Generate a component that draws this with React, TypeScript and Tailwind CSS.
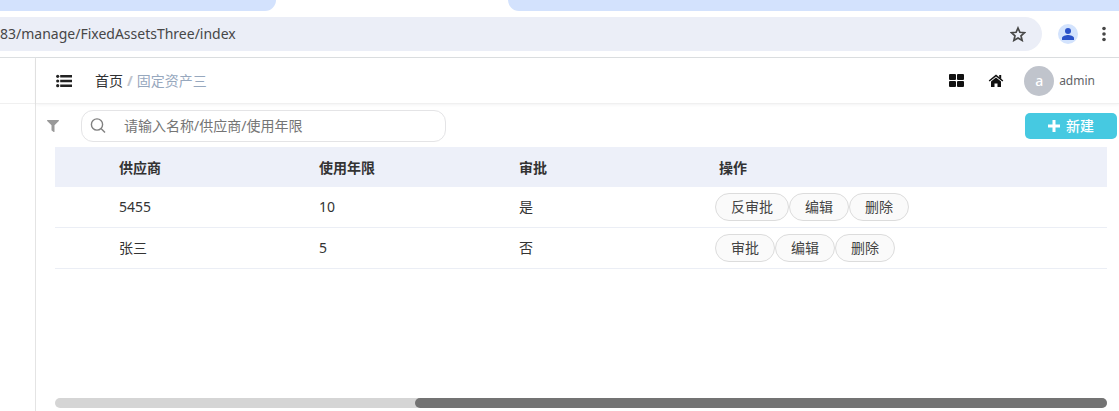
import { FaFilter } from "react-icons/fa";

const columns = ["供应商", "使用年限", "审批", "操作"];

const assets = [
  { supplier: "5455", years: 10, approved: true },
  { supplier: "张三", years: 5, approved: false },
];

function BrowserBar() {
  return (
    <div className="border-b border-[#dcdfe1]">
      <div className="flex h-[11px] overflow-hidden">
        <div className="w-[276px] rounded-br-[11px] bg-[#d3e2fd]" />
        <div className="w-[232px]" />
        <div className="flex-1 rounded-bl-[11px] bg-[#d3e2fd]" />
      </div>
      <div className="flex items-center py-[6px] pr-[5px]">
        <div className="flex h-[34px] flex-1 items-center justify-between rounded-r-full bg-[#ebeef7] pr-4">
          <span className="text-sm text-[#474747]">83/manage/FixedAssetsThree/index</span>
          <button aria-label="Bookmark">
            <StarIcon />
          </button>
        </div>
        <button aria-label="Profile" className="ml-4 h-5 w-5 rounded-full bg-[#d3e3fd]">
          <svg viewBox="0 0 20 20" className="h-5 w-5" fill="#2a52c9">
            <circle cx="10" cy="7" r="3" />
            <path d="M4 16v-2c0-2 4-3 6-3s6 1 6 3v2z" />
          </svg>
        </button>
        <button aria-label="Menu" className="ml-4">
          <svg viewBox="0 0 20 20" className="h-5 w-5" fill="#474747">
            <circle cx="10" cy="4.5" r="1.8" />
            <circle cx="10" cy="10" r="1.8" />
            <circle cx="10" cy="15.5" r="1.8" />
          </svg>
        </button>
      </div>
    </div>
  );
}

function StarIcon() {
  return (
    <svg viewBox="0 0 16 16" className="h-4 w-4" fill="none" stroke="#474747" strokeWidth="1.7">
      <path d="M8 2l1.9 4.3 4.7.4-3.6 3.1 1.1 4.6L8 12l-4.1 2.4L5 9.8 1.4 6.7l4.7-.4z" />
    </svg>
  );
}

function ListIcon() {
  return (
    <svg viewBox="0 0 16 14" className="h-[14px] w-4" fill="#222">
      <circle cx="1.7" cy="2.3" r="1.6" />
      <circle cx="1.7" cy="7" r="1.6" />
      <circle cx="1.7" cy="11.7" r="1.6" />
      <path d="M4.2 1.1H16v2.4H4.2zM4.2 5.8H16v2.4H4.2zM4.2 10.5H16v2.4H4.2z" />
    </svg>
  );
}

function GridIcon() {
  return (
    <svg viewBox="0 0 16 14" className="h-[14px] w-4" fill="#111">
      <rect x="1" y="0" width="7" height="6" rx="1" />
      <rect x="9" y="0" width="7" height="6" rx="1" />
      <rect x="1" y="7" width="7" height="6" rx="1" />
      <rect x="9" y="7" width="7" height="6" rx="1" />
    </svg>
  );
}

function HomeIcon() {
  return (
    <svg viewBox="0 0 16 14" className="h-[14px] w-4" fill="#111">
      <path d="M8 .5l7.3 6-.9 1.1L8 2.4 1.6 7.6.7 6.5z" />
      <path d="M11.2 1h2v4.2l-2-1.7z" />
      <path d="M8 3.5l5 4.1V13H9.5V9.5h-3V13H3V7.6z" />
    </svg>
  );
}

function PlusIcon() {
  return (
    <svg viewBox="0 0 12 12" className="h-3 w-3" fill="currentColor">
      <path d="M4.500 0h3v4.500H12v3H7.500V12h-3V7.500H0v-3h4.500z" />
    </svg>
  );
}

function Header() {
  return (
    <header className="flex h-[46px] items-center justify-between border-b border-[#f0f0f0] pr-6 pl-5 shadow-[0_1px_3px_rgba(0,21,41,0.05)]">
      <div className="flex items-center">
        <button aria-label="Toggle menu">
          <ListIcon />
        </button>
        <nav className="ml-[23px] flex gap-1 text-sm">
          <a href="#" className="text-[#303133]">首页</a>
          <span className="font-bold text-[#c0c4cc]">/</span>
          <span className="text-[#97a8be]">固定资产三</span>
        </nav>
      </div>
      <div className="flex items-center">
        <button aria-label="Layout">
          <GridIcon />
        </button>
        <button aria-label="Home" className="ml-6">
          <HomeIcon />
        </button>
        <span className="ml-5 flex h-[30px] w-[30px] items-center justify-center rounded-full bg-[#c0c4cc] text-sm font-medium text-white">
          a
        </span>
        <span className="ml-[5px] text-xs text-[#606266]">admin</span>
      </div>
    </header>
  );
}

function Toolbar() {
  return (
    <div className="flex items-center justify-between pt-[6px] pr-[2px] pl-[11px]">
      <div className="flex items-center">
        <button aria-label="Filter" className="text-xs text-[#999]">
          <FaFilter />
        </button>
        <label className="ml-[22px] flex h-8 w-[365px] items-center rounded-xl border border-[#e4e4e6] pl-2">
          <svg viewBox="0 0 16 16" className="h-4 w-4" fill="none" stroke="#808080" strokeWidth="1.4">
            <circle cx="7" cy="6.5" r="5.6" />
            <path d="M11 10.5l4 4" />
          </svg>
          <input
            aria-label="搜索"
            placeholder="请输入名称/供应商/使用年限"
            className="ml-[18px] min-w-0 flex-1 text-sm outline-none placeholder:text-[#757575]"
          />
        </label>
      </div>
      <button className="flex h-[26px] w-[92px] items-center justify-center gap-[6px] rounded-[5px] bg-[#46c9e1] text-sm font-medium text-white">
        <PlusIcon />
        新建
      </button>
    </div>
  );
}

function ActionButton({ label }: { label: string }) {
  return (
    <button className="h-7 rounded-full border border-[#dcdcdc] bg-[#fafafa] px-[15px] text-sm text-[#444]">
      {label}
    </button>
  );
}

function AssetTable() {
  return (
    <table className="w-full table-fixed border-separate border-spacing-0 text-left text-sm text-[#333]">
      <colgroup>
        <col className="w-[54px]" />
        <col className="w-[200px]" />
        <col className="w-[200px]" />
        <col className="w-[200px]" />
        <col />
      </colgroup>
      <thead>
        <tr className="h-10 bg-[#edf0f9]">
          <td />
          {columns.map((column) => (
            <th key={column} className="pt-[2px] pl-[10px] font-bold">
              {column}
            </th>
          ))}
        </tr>
      </thead>
      <tbody>
        {assets.map((asset) => (
          <tr key={asset.supplier} className="h-[41px] *:border-b *:border-[#ebeef5]">
            <td />
            <td className="pl-[10px]">{asset.supplier}</td>
            <td className="pl-[10px]">{asset.years}</td>
            <td className="pl-[10px]">{asset.approved ? "是" : "否"}</td>
            <td className="pl-[6px]">
              <div className="flex">
                <ActionButton label={asset.approved ? "反审批" : "审批"} />
                <ActionButton label="编辑" />
                <ActionButton label="删除" />
              </div>
            </td>
          </tr>
        ))}
      </tbody>
    </table>
  );
}

export default function App() {
  return (
    <div className="flex min-h-screen flex-col bg-white font-['Noto_Sans','Noto_Sans_CJK_SC',sans-serif]">
      <BrowserBar />
      <div className="flex flex-1">
        <aside className="w-9 border-r border-[#e4e4e4]">
          <div className="h-[46px] border-b border-[#f0f0f0]" />
        </aside>
        <main className="flex min-w-0 flex-1 flex-col">
          <Header />
          <Toolbar />
          <div className="flex flex-1 flex-col justify-between pt-[5px] pr-3 pb-[3px] pl-[19px]">
            <AssetTable />
            <div className="flex h-[10px] rounded-full bg-[#d5d5d5]">
              <div className="flex-[90]" />
              <div className="flex-[173] rounded-full bg-[#737373]" />
            </div>
          </div>
        </main>
      </div>
    </div>
  );
}
